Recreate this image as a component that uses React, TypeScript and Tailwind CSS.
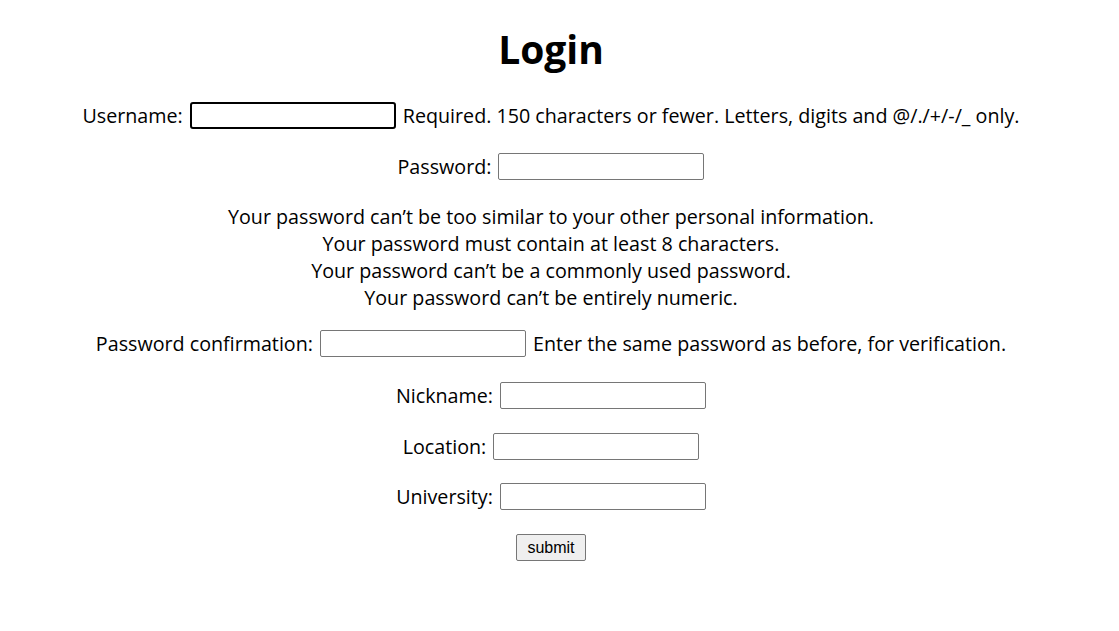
import type { ReactNode } from "react";

function Row(props: {
  label: string;
  help?: string;
  focused?: boolean;
  className?: string;
}): React.JSX.Element {
  return (
    <div
      className={`flex h-[27px] items-center justify-center gap-[7px] ${props.className ?? ""}`}
    >
      <label>{props.label}</label>
      <input
        type="text"
        className={
          props.focused
            ? "h-[27px] w-[206px] rounded-[3px] border-2 border-black bg-white px-1 outline-none"
            : "h-[27px] w-[206px] rounded-[2px] border border-[#767676] bg-white px-1 outline-none"
        }
      />
      {props.help ? <span>{props.help}</span> : null}
    </div>
  );
}

function HelpList(props: { children: ReactNode }): React.JSX.Element {
  return (
    <div className="flex flex-col items-center leading-[27px]">
      {props.children}
    </div>
  );
}

export default function App(): React.JSX.Element {
  return (
    <div
      className="min-h-screen bg-white pr-[17px] text-[19.7px] leading-[27px] text-black"
      style={{ fontFamily: '"Open Sans", "Noto Sans CJK KR", sans-serif' }}
    >
      <div className="flex flex-col items-center pt-[23px]">
        <h1 className="text-[39px] font-bold leading-[52px]">Login</h1>
        <form className="mt-[27px] flex w-full flex-col items-center">
          <Row
            label="Username:"
            focused
            help="Required. 150 characters or fewer. Letters, digits and @/./+/-/_ only."
          />
          <Row label="Password:" className="mt-[24px]" />
          <div className="mt-[23px]">
            <HelpList>
              <span>Your password can’t be too similar to your other personal information.</span>
              <span>Your password must contain at least 8 characters.</span>
              <span>Your password can’t be a commonly used password.</span>
              <span>Your password can’t be entirely numeric.</span>
            </HelpList>
          </div>
          <Row
            label="Password confirmation:"
            className="mt-[19px]"
            help="Enter the same password as before, for verification."
          />
          <Row label="Nickname:" className="mt-[25px]" />
          <Row label="Location:" className="mt-[24px]" />
          <Row label="University:" className="mt-[23px]" />
          <button
            type="submit"
            className="mt-[24px] h-[27px] w-[70px] rounded-[2px] border border-[#767676] bg-[#efefef] text-[16px] leading-none"
            style={{ fontFamily: '"Liberation Sans", Arial, sans-serif' }}
          >
            submit
          </button>
        </form>
      </div>
    </div>
  );
}
